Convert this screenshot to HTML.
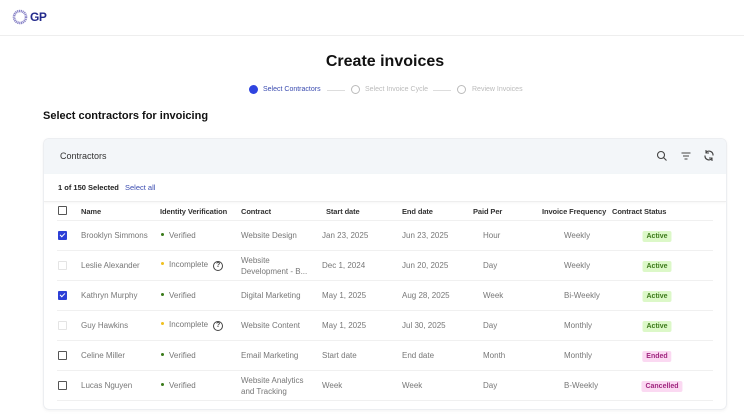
<!DOCTYPE html>
<html><head><meta charset="utf-8"><style>
*{margin:0;padding:0;box-sizing:border-box}
body{width:744px;height:418px;overflow:hidden;background:#fff;font-family:"Liberation Sans",sans-serif;position:relative;color:#222}
.a{position:absolute;white-space:nowrap}
.hdr{position:absolute;left:0;top:0;width:744px;height:36px;border-bottom:1px solid #eee}
.card{position:absolute;left:43px;top:138px;width:684px;height:272px;border:1px solid #eceef1;border-radius:6px;box-shadow:0 1px 3px rgba(0,0,0,.05);overflow:hidden}
.ch{position:absolute;left:0;top:0;width:100%;height:35px;background:#f3f6f9}
.sub{position:absolute;left:0;top:35px;width:100%;height:28px;border-bottom:1px solid #eee;box-shadow:0 1px 2px rgba(0,0,0,.04)}
.th{font-size:7.5px;font-weight:bold;color:#333;letter-spacing:-0.1px}
.td{font-size:8px;color:#777}
.cb{position:absolute;width:9px;height:9px;border:1px solid #555;border-radius:1px;background:#fff}
.cb.on{background:#2c3fd6;border-color:#2c3fd6}
.cb.on:after{content:"";position:absolute;left:2px;top:0px;width:2px;height:4px;border:solid #fff;border-width:0 1.3px 1.3px 0;transform:rotate(45deg)}
.cb.dis{border-color:#e4e4e4}
.sep{position:absolute;left:14px;width:656px;height:1px;background:#f0f0f0}
.dot{display:inline-block;width:3px;height:3px;border-radius:50%;margin-right:5px;vertical-align:middle;position:relative;top:-1px}
.q{display:inline-block;width:10px;height:10px;border:1px solid #444;border-radius:50%;font-size:7px;line-height:8px;text-align:center;color:#444;margin-left:5px;font-weight:bold}
.bd{position:absolute;font-size:7px;font-weight:bold;padding:2px 4px;border-radius:2px;transform:translateX(-50%)}
.g{background:#dcf8c8;color:#3d7a1a}
.p{background:#fbd9f2;color:#a0267f}
</style></head><body>
<div class="hdr"></div>
<svg class="a" style="left:12px;top:9px" width="16" height="16" viewBox="0 0 16 16"><circle cx="8" cy="8" r="6" fill="none" stroke="#8b86c8" stroke-width="2.6" stroke-dasharray="1.2 0.6"/></svg>
<div class="a" style="left:30px;top:10px;font-size:12px;font-weight:bold;color:#232a8c;letter-spacing:-0.5px">GP</div>

<div class="a" style="left:0;width:770px;text-align:center;top:53px;font-size:16px;font-weight:bold;color:#111">Create invoices</div>
<div class="a" style="left:249px;top:85px;width:9px;height:9px;border-radius:50%;background:#2f44e0"></div>
<div class="a" style="left:263px;top:86px;font-size:7px;color:#3b4cb0">Select Contractors</div>
<div class="a" style="left:327px;top:90px;width:18px;height:1px;background:#ddd"></div>
<div class="a" style="left:351px;top:85px;width:9px;height:9px;border-radius:50%;border:1px solid #bbb"></div>
<div class="a" style="left:365px;top:86px;font-size:7px;color:#bbb">Select Invoice Cycle</div>
<div class="a" style="left:433px;top:90px;width:18px;height:1px;background:#ddd"></div>
<div class="a" style="left:457px;top:85px;width:9px;height:9px;border-radius:50%;border:1px solid #bbb"></div>
<div class="a" style="left:472px;top:86px;font-size:7px;color:#bbb">Review Invoices</div>

<div class="a" style="left:43px;top:110px;font-size:11px;font-weight:bold;color:#111">Select contractors for invoicing</div>

<div class="card">
<div class="ch"></div>
<div class="a" style="left:16px;top:12px;font-size:9px;color:#333">Contractors</div>
<svg class="a" style="left:612px;top:11px" width="12" height="12" viewBox="0 0 12 12"><circle cx="5" cy="5" r="3.5" fill="none" stroke="#444" stroke-width="1.1"/><line x1="7.6" y1="7.6" x2="10.5" y2="10.5" stroke="#444" stroke-width="1.1"/></svg>
<svg class="a" style="left:636px;top:11px" width="12" height="12" viewBox="0 0 12 12"><path d="M1.5 3h9M3 6h6M4.5 9h3" stroke="#444" stroke-width="1.1"/></svg>
<svg class="a" style="left:659px;top:10px" width="12" height="13" viewBox="0 0 12 13"><path d="M3 3.5A4 4 0 0 1 10 6.5M9 9.5A4 4 0 0 1 2 6.5" fill="none" stroke="#444" stroke-width="1.2"/><path d="M3 1v3h3M9 12V9H6" fill="none" stroke="#444" stroke-width="1.1"/></svg>
<div class="sub"></div>
<div class="a" style="left:14px;top:44px;font-size:7.5px;font-weight:bold;color:#222">1 of 150 Selected</div>
<div class="a" style="left:81px;top:44px;font-size:7.5px;color:#3b4cb0">Select all</div>
</div>

<div class="cb" style="left:58px;top:206px"></div>
<div class="a th" style="left:81px;top:207px">Name</div>
<div class="a th" style="left:160px;top:207px">Identity Verification</div>
<div class="a th" style="left:241px;top:207px">Contract</div>
<div class="a th" style="left:326px;top:207px">Start date</div>
<div class="a th" style="left:402px;top:207px">End date</div>
<div class="a th" style="left:473px;top:207px">Paid Per</div>
<div class="a th" style="left:542px;top:207px">Invoice Frequency</div>
<div class="a th" style="left:612px;top:207px">Contract Status</div>

<div class="sep" style="left:57px;top:220px"></div>
<div class="sep" style="left:57px;top:250px"></div>
<div class="sep" style="left:57px;top:280px"></div>
<div class="sep" style="left:57px;top:310px"></div>
<div class="sep" style="left:57px;top:340px"></div>
<div class="sep" style="left:57px;top:370px"></div>
<div class="sep" style="left:57px;top:400px"></div>

<div class="cb on" style="left:58px;top:231px"></div>
<div class="a td" style="left:81px;top:231px">Brooklyn Simmons</div>
<div class="a td" style="left:161px;top:231px"><span class="dot" style="background:#3a7a1a"></span>Verified</div>
<div class="a td" style="left:241px;top:231px">Website Design</div>
<div class="a td" style="left:322px;top:231px">Jan 23, 2025</div>
<div class="a td" style="left:402px;top:231px">Jun 23, 2025</div>
<div class="a td" style="left:483px;top:231px">Hour</div>
<div class="a td" style="left:564px;top:231px">Weekly</div>
<div class="bd g" style="left:657px;top:231px">Active</div>

<div class="cb dis" style="left:58px;top:261px"></div>
<div class="a td" style="left:81px;top:261px">Leslie Alexander</div>
<div class="a td" style="left:161px;top:260px"><span class="dot" style="background:#f0c020"></span>Incomplete<span class="q">?</span></div>
<div class="a td" style="left:241px;top:255px;line-height:11px">Website<br>Development - B...</div>
<div class="a td" style="left:322px;top:261px">Dec 1, 2024</div>
<div class="a td" style="left:402px;top:261px">Jun 20, 2025</div>
<div class="a td" style="left:483px;top:261px">Day</div>
<div class="a td" style="left:564px;top:261px">Weekly</div>
<div class="bd g" style="left:657px;top:261px">Active</div>

<div class="cb on" style="left:58px;top:291px"></div>
<div class="a td" style="left:81px;top:291px">Kathryn Murphy</div>
<div class="a td" style="left:161px;top:291px"><span class="dot" style="background:#3a7a1a"></span>Verified</div>
<div class="a td" style="left:241px;top:291px">Digital Marketing</div>
<div class="a td" style="left:322px;top:291px">May 1, 2025</div>
<div class="a td" style="left:402px;top:291px">Aug 28, 2025</div>
<div class="a td" style="left:483px;top:291px">Week</div>
<div class="a td" style="left:564px;top:291px">Bi-Weekly</div>
<div class="bd g" style="left:657px;top:291px">Active</div>

<div class="cb dis" style="left:58px;top:321px"></div>
<div class="a td" style="left:81px;top:321px">Guy Hawkins</div>
<div class="a td" style="left:161px;top:320px"><span class="dot" style="background:#f0c020"></span>Incomplete<span class="q">?</span></div>
<div class="a td" style="left:241px;top:321px">Website Content</div>
<div class="a td" style="left:322px;top:321px">May 1, 2025</div>
<div class="a td" style="left:402px;top:321px">Jul 30, 2025</div>
<div class="a td" style="left:483px;top:321px">Day</div>
<div class="a td" style="left:564px;top:321px">Monthly</div>
<div class="bd g" style="left:657px;top:321px">Active</div>

<div class="cb" style="left:58px;top:351px"></div>
<div class="a td" style="left:81px;top:351px">Celine Miller</div>
<div class="a td" style="left:161px;top:351px"><span class="dot" style="background:#3a7a1a"></span>Verified</div>
<div class="a td" style="left:241px;top:351px">Email Marketing</div>
<div class="a td" style="left:322px;top:351px">Start date</div>
<div class="a td" style="left:402px;top:351px">End date</div>
<div class="a td" style="left:483px;top:351px">Month</div>
<div class="a td" style="left:564px;top:351px">Monthly</div>
<div class="bd p" style="left:657px;top:351px">Ended</div>

<div class="cb" style="left:58px;top:381px"></div>
<div class="a td" style="left:81px;top:381px">Lucas Nguyen</div>
<div class="a td" style="left:161px;top:381px"><span class="dot" style="background:#3a7a1a"></span>Verified</div>
<div class="a td" style="left:241px;top:375px;line-height:11px">Website Analytics<br>and Tracking</div>
<div class="a td" style="left:322px;top:381px">Week</div>
<div class="a td" style="left:402px;top:381px">Week</div>
<div class="a td" style="left:483px;top:381px">Day</div>
<div class="a td" style="left:564px;top:381px">B-Weekly</div>
<div class="bd p" style="left:662px;top:381px">Cancelled</div>
</body></html>
